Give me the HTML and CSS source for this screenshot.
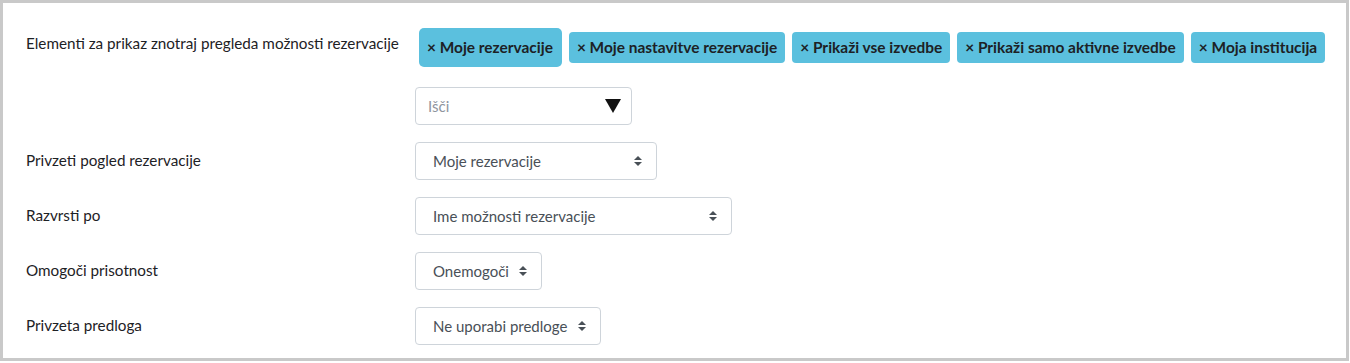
FILE: index.html
```html
<!DOCTYPE html>
<html lang="sl">
<head>
<meta charset="utf-8">
<title>Nastavitve rezervacij</title>
<link rel="stylesheet" href="styles.css">
</head>
<body>
<div class="frame">
  <div class="form">
    <div class="row row-first">
      <div class="label label-first">Elementi za prikaz znotraj pregleda možnosti rezervacije</div>
      <div class="control">
        <div class="tags">
          <span class="tag tag-big">× Moje rezervacije</span>
          <span class="tag">× Moje nastavitve rezervacije</span>
          <span class="tag">× Prikaži vse izvedbe</span>
          <span class="tag">× Prikaži samo aktivne izvedbe</span>
          <span class="tag">× Moja institucija</span>
        </div>
        <div class="search">
          <span class="placeholder">Išči</span>
          <svg class="down" width="16" height="14" viewBox="0 0 16 14"><polygon points="0,0 16,0 8,14" fill="#111"/></svg>
        </div>
      </div>
    </div>
    <div class="row">
      <div class="label">Privzeti pogled rezervacije</div>
      <div class="control">
        <div class="select s1"><span>Moje rezervacije</span><svg class="updown" width="8" height="10" viewBox="0 0 8 10"><polygon points="0,4 8,4 4,0" fill="#495057"/><polygon points="0,6 8,6 4,10" fill="#495057"/></svg></div>
      </div>
    </div>
    <div class="row">
      <div class="label">Razvrsti po</div>
      <div class="control">
        <div class="select s2"><span>Ime možnosti rezervacije</span><svg class="updown" width="8" height="10" viewBox="0 0 8 10"><polygon points="0,4 8,4 4,0" fill="#495057"/><polygon points="0,6 8,6 4,10" fill="#495057"/></svg></div>
      </div>
    </div>
    <div class="row">
      <div class="label">Omogoči prisotnost</div>
      <div class="control">
        <div class="select s3"><span>Onemogoči</span><svg class="updown" width="8" height="10" viewBox="0 0 8 10"><polygon points="0,4 8,4 4,0" fill="#495057"/><polygon points="0,6 8,6 4,10" fill="#495057"/></svg></div>
      </div>
    </div>
    <div class="row">
      <div class="label">Privzeta predloga</div>
      <div class="control">
        <div class="select s4"><span>Ne uporabi predloge</span><svg class="updown" width="8" height="10" viewBox="0 0 8 10"><polygon points="0,4 8,4 4,0" fill="#495057"/><polygon points="0,6 8,6 4,10" fill="#495057"/></svg></div>
      </div>
    </div>
  </div>
</div>
</body>
</html>
```
FILE: styles.css
```css
html, body {
  margin: 0;
  padding: 0;
  background: #fff;
}
body {
  font-family: Lato, "Liberation Sans", sans-serif;
  font-size: 15px;
  color: #1d2125;
}
.frame {
  width: 1349px;
  height: 361px;
  box-sizing: border-box;
  border: 3px solid #c9c9c9;
  padding: 25px 0 0 23px;
}
.form {
  display: flex;
  flex-direction: column;
  gap: 17px;
}
.row {
  display: grid;
  grid-template-columns: 389px 1fr;
}
.label {
  font-size: 15.25px;
  line-height: 23px;
  padding-top: 7px;
}
.label-first {
  padding-top: 4px;
}
.control {
  display: flex;
  flex-direction: column;
  align-items: flex-start;
}
.tags {
  display: flex;
  align-items: center;
  gap: 7px;
  padding-left: 4px;
  height: 39px;
}
.tag {
  background: #5bc0de;
  color: #1d2125;
  font-weight: 700;
  font-size: 15.45px;
  height: 31px;
  line-height: 31px;
  padding: 0 8px;
  border-radius: 4px;
  white-space: nowrap;
}
.tag-big {
  height: 39px;
  line-height: 39px;
  border-radius: 5px;
  padding: 0 9px 0 8px;
}
.search {
  margin-top: 20px;
  width: 217px;
  height: 38px;
  box-sizing: border-box;
  border: 1px solid #ced4da;
  border-radius: 4px;
  display: flex;
  align-items: center;
  justify-content: space-between;
  padding: 0 10px 0 12px;
}
.placeholder {
  color: #8f959e;
}
.select {
  height: 38px;
  box-sizing: border-box;
  border: 1px solid #ced4da;
  border-radius: 4px;
  display: flex;
  align-items: center;
  justify-content: space-between;
  padding: 0 14px 0 17px;
  color: #495057;
}
.s1 { width: 242px; }
.s2 { width: 317px; }
.s3 { width: 127px; }
.s4 { width: 186px; }
.updown {
  flex: none;
}
```
